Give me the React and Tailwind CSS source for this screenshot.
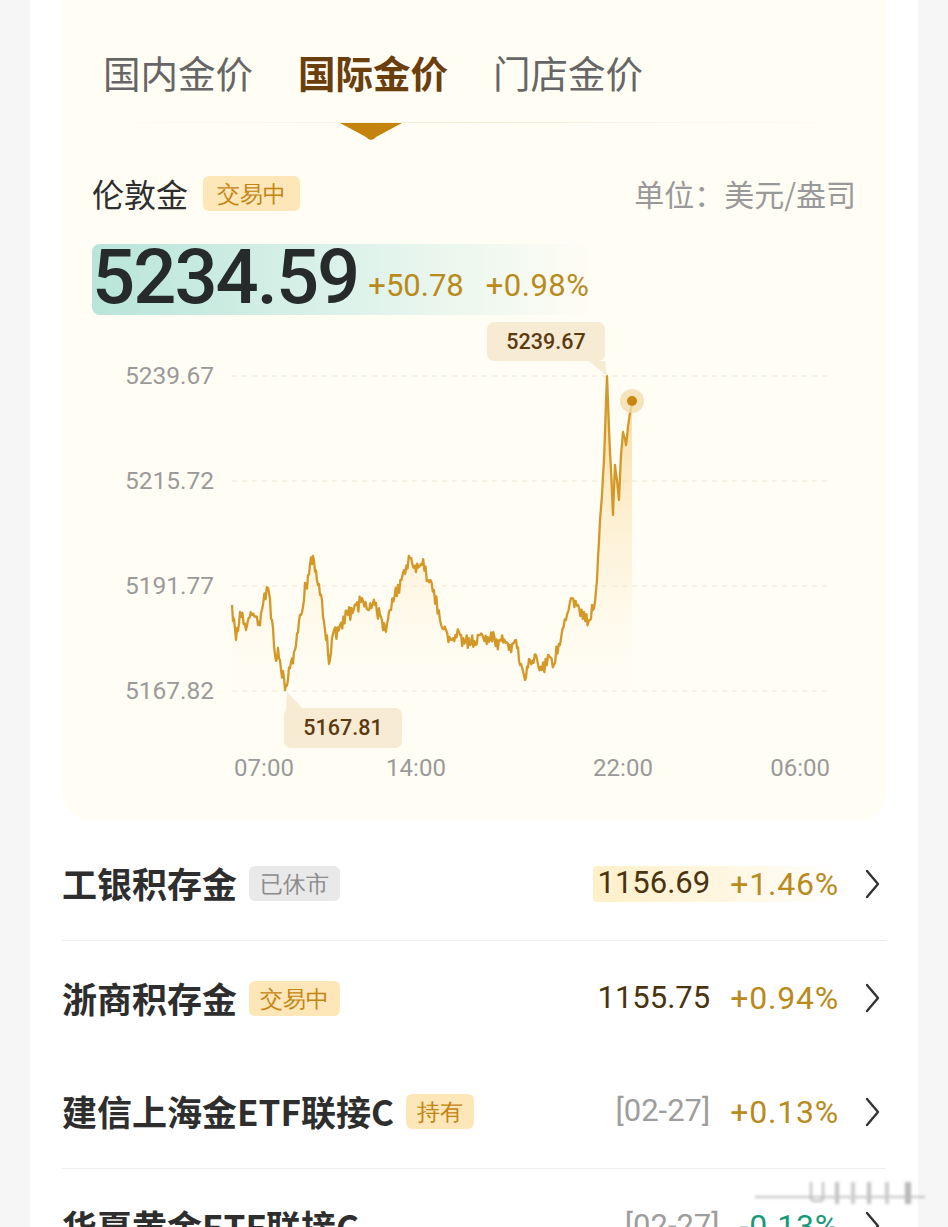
const CJK = "font-['Noto_Sans_CJK_SC',_'Noto_Sans',_sans-serif]";
const NUM = "font-['Roboto',_'Noto_Sans_CJK_SC',_sans-serif]";

// rough shape of the day, in page coordinates
const keys = [
  [232, 605], [236, 640], [240, 612], [246, 630], [252, 615], [258, 625], [262, 610], [268, 588],
  [272, 620], [275, 655], [280, 660], [285, 690], [290, 668], [295, 650], [300, 615], [304, 600],
  [308, 575], [313, 556], [318, 585], [322, 600], [326, 640], [330, 660], [334, 630], [340, 625],
  [348, 615], [356, 605], [362, 598], [368, 610], [375, 605], [380, 615], [385, 630], [390, 610],
  [398, 585], [404, 570], [410, 558], [416, 572], [422, 565], [428, 580], [434, 590], [440, 620],
  [446, 630], [452, 640], [460, 635], [470, 645], [480, 635], [490, 640], [500, 640], [510, 645],
  [516, 640], [520, 665], [525, 680], [530, 660], [536, 655], [542, 670], [548, 655], [554, 665],
  [560, 645], [566, 620], [572, 598], [578, 605], [584, 612], [590, 620], [594, 608], [597, 580],
  [600, 520], [602, 495], [604, 460], [607, 376], [609, 430], [611, 470], [613, 515], [615, 465],
  [617, 480], [619, 500], [621, 455], [623, 432], [626, 445], [629, 420], [632, 401],
];

const noise = (x) =>
  4.2 * Math.sin(x * 2.3) + 3.4 * Math.sin(x * 5.1 + 1.3) + 2.2 * Math.sin(x * 0.9 + 0.4) + 2 * Math.sin(x * 7.7);

const buildLine = () => {
  const pts = [];
  for (let i = 0; i < keys.length - 1; i++) {
    const [x0, y0] = keys[i];
    const [x1, y1] = keys[i + 1];
    const steps = Math.max(1, Math.round((x1 - x0) / 1.1));
    for (let s = 0; s < steps; s++) {
      const t = s / steps;
      const x = x0 + (x1 - x0) * t;
      let y = y0 + (y1 - y0) * t;
      if (s > 0) y += noise(x) * (x < 596 ? 1 : 0.3);
      pts.push([x - 62, y - 320]);
    }
  }
  const last = keys[keys.length - 1];
  pts.push([last[0] - 62, last[1] - 320]);
  return pts;
};

const line = buildLine();
const linePath = line.map((p, i) => (i ? "L" : "M") + p[0].toFixed(1) + " " + p[1].toFixed(1)).join(" ");
const areaPath = `${linePath} L ${line[line.length - 1][0]} 372 L ${line[0][0]} 372 Z`;

const grid = [
  { y: 56, label: "5239.67" },
  { y: 161, label: "5215.72" },
  { y: 266, label: "5191.77" },
  { y: 371, label: "5167.82" },
];

const Chart = () => (
  <svg width="824" height="480" viewBox="0 0 824 480" className="block">
    <defs>
      <linearGradient id="fill" x1="0" y1="56" x2="0" y2="372" gradientUnits="userSpaceOnUse">
        <stop offset="0" stopColor="#f7c466" stopOpacity="0.65" />
        <stop offset="0.6" stopColor="#fbe0aa" stopOpacity="0.28" />
        <stop offset="1" stopColor="#fff6e2" stopOpacity="0" />
      </linearGradient>
    </defs>
    {grid.map((g) => (
      <g key={g.y}>
        <line x1="170" x2="768" y1={g.y} y2={g.y} stroke="#efe6d2" strokeWidth="1" strokeDasharray="5 5" />
        <text x="152" y={g.y + 8} textAnchor="end" fontSize="24.5" fill="#9a9a9a" fontFamily="Roboto, sans-serif">
          {g.label}
        </text>
      </g>
    ))}
    <path d={areaPath} fill="url(#fill)" />
    <path d={linePath} fill="none" stroke="#d39828" strokeWidth="2.3" strokeLinejoin="round" />
    <circle cx="570" cy="81" r="12" fill="#f3dcae" opacity="0.8" />
    <circle cx="570" cy="81" r="5" fill="#c9860f" />

    {/* high */}
    <rect x="425" y="2" width="118" height="39" rx="7" fill="#f7ebd3" />
    <polygon points="527,41 543,41 545,56" fill="#f7ebd3" />
    <text x="484" y="29" textAnchor="middle" fontSize="21.5" fontWeight="500" fill="#5b3a12" fontFamily="Roboto, sans-serif">
      5239.67
    </text>

    {/* low */}
    <rect x="222" y="388" width="118" height="40" rx="7" fill="#f7ebd3" />
    <polygon points="225,372 224,390 242,390" fill="#f7ebd3" />
    <text x="281" y="415" textAnchor="middle" fontSize="21.5" fontWeight="500" fill="#5b3a12" fontFamily="Roboto, sans-serif">
      5167.81
    </text>

    {[
      { x: 202, t: "07:00", a: "middle" },
      { x: 354, t: "14:00", a: "middle" },
      { x: 561, t: "22:00", a: "middle" },
      { x: 768, t: "06:00", a: "end" },
    ].map((l) => (
      <text key={l.t} x={l.x} y="456" textAnchor={l.a} fontSize="24" fill="#9a9a9a" fontFamily="Roboto, sans-serif">
        {l.t}
      </text>
    ))}
  </svg>
);

const Badge = ({ children, tone, className = "" }) => (
  <span
    className={
      "rounded-md text-[23px] leading-[35px] " +
      className +
      " " +
      (tone === "gray" ? "bg-[#e9e9e9] text-[#8c8c8c]" : "bg-[#fde6b8] text-[#c38512]")
    }
  >
    {children}
  </span>
);

const Chevron = () => (
  <svg width="16" height="30" viewBox="0 0 16 30" className="ml-[26px] mr-[5px]">
    <path d="M2 2 L13 15 L2 28" fill="none" stroke="#333" strokeWidth="2.4" strokeLinecap="round" strokeLinejoin="round" />
  </svg>
);

const rows = [
  { name: "工银积存金", badge: "已休市", tone: "gray", price: "1156.69", change: "+1.46%", glow: true, line: true },
  { name: "浙商积存金", badge: "交易中", price: "1155.75", change: "+0.94%" },
  { name: "建信上海金ETF联接C", badge: "持有", date: "[02-27]", change: "+0.13%", line: true },
  { name: "华夏黄金ETF联接C", date: "[02-27]", change: "-0.13%", down: true },
];

const Row = ({ r }) => (
  <div className={"h-[114px] flex items-center " + (r.line ? "border-b border-[#eeeeee]" : "")}>
    <span className={CJK + " text-[35px] font-bold text-[#2e2e2e]"}>{r.name}</span>
    {r.badge && <Badge tone={r.tone} className="ml-[12px] px-[11px]">{r.badge}</Badge>}
    <div className="ml-auto flex items-center">
      <div
        className={
          "flex items-center gap-[20px] pl-1 h-[36px] rounded " +
          (r.glow ? "bg-gradient-to-r from-[#fff0c9] via-[#fff6e0] to-transparent" : "")
        }
      >
        {r.price && <span className={NUM + " text-[31px] text-[#4a3410]"}>{r.price}</span>}
        {r.date && <span className={NUM + " text-[31px] text-[#9d9d9d]"}>{r.date}</span>}
        <span className={NUM + " text-[32px] tracking-[0.8px] " + (r.down ? "text-[#17997a]" : "text-[#b98a1c]")}>
          {r.change}
        </span>
      </div>
      <Chevron />
    </div>
  </div>
);

export default function App() {
  return (
    <div className="relative h-[1227px] overflow-hidden bg-[#f6f6f6] px-[30px]">
      <div className="h-full bg-white px-[32px]">
        <div className="bg-[#fffdf4] rounded-b-[28px] pb-[20px]">
          <div className={CJK + " flex gap-[45px] pl-[41px] pt-[47px] pb-[3px] text-[37.5px] leading-[50px]"}>
            <span className="text-[#666]">国内金价</span>
            <span className="text-[#6b3e0d] font-bold">国际金价</span>
            <span className="text-[#666]">门店金价</span>
          </div>
          <div className="mt-[22px] mx-[18px] h-px bg-gradient-to-r from-transparent via-[#f6ecd6] to-transparent" />
          <div className="pl-[278px]">
            <svg width="62" height="20" viewBox="0 0 62 20" className="block">
              <path d="M0 0 H62 L36 14 Q31 20 26 14 Z" fill="#c4830d" />
            </svg>
          </div>
          <div className="mt-[30px] px-[30px] flex items-center h-[40px]">
            <span className={CJK + " text-[32px] text-[#2e2e2e]"}>伦敦金</span>
            <Badge className="ml-[15px] px-[14px]">交易中</Badge>
            <span className={CJK + " ml-auto text-[30px] text-[#999]"}>单位：美元/盎司</span>
          </div>
          <div className="mt-[31px] ml-[30px] w-[500px] h-[71px] rounded-lg bg-gradient-to-r from-[#b8e5d8] via-[#dcf2ea] to-transparent flex items-end">
            <span className={NUM + " text-[76px] leading-[76px] font-medium tracking-[-2px] text-[#262a2a]"}>5234.59</span>
            <span className={NUM + " ml-[10px] mb-[6px] text-[31px] text-[#b98a1c]"}>+50.78</span>
            <span className={NUM + " ml-[22px] mb-[6px] text-[31px] tracking-[0.5px] text-[#b98a1c]"}>+0.98%</span>
          </div>
          <div className="mt-[5px]">
            <Chart />
          </div>
        </div>
        <div className="mt-[7px]">
          {rows.map((r) => (
            <Row key={r.name} r={r} />
          ))}
        </div>
      </div>

      {/* faint watermark bottom right */}
      <div className="absolute left-[755px] top-[1180px] w-[170px] h-[26px] blur-[1.5px] opacity-60">
        <div className="absolute left-0 right-0 top-[16px] h-[2px] bg-[#9a9a9a]" />
        <div className="absolute left-[55px] top-[2px] w-[14px] h-[20px] border-2 border-t-0 border-[#888] rounded-b" />
        <div className="absolute left-[80px] top-[2px] w-[4px] h-[22px] bg-[#999]" />
        <div className="absolute left-[96px] top-[2px] w-[4px] h-[22px] bg-[#aaa]" />
        <div className="absolute left-[112px] top-[2px] w-[4px] h-[22px] bg-[#999]" />
        <div className="absolute left-[130px] top-[2px] w-[4px] h-[22px] bg-[#aaa]" />
        <div className="absolute left-[150px] top-[2px] w-[6px] h-[22px] bg-[#888]" />
      </div>
    </div>
  );
}
